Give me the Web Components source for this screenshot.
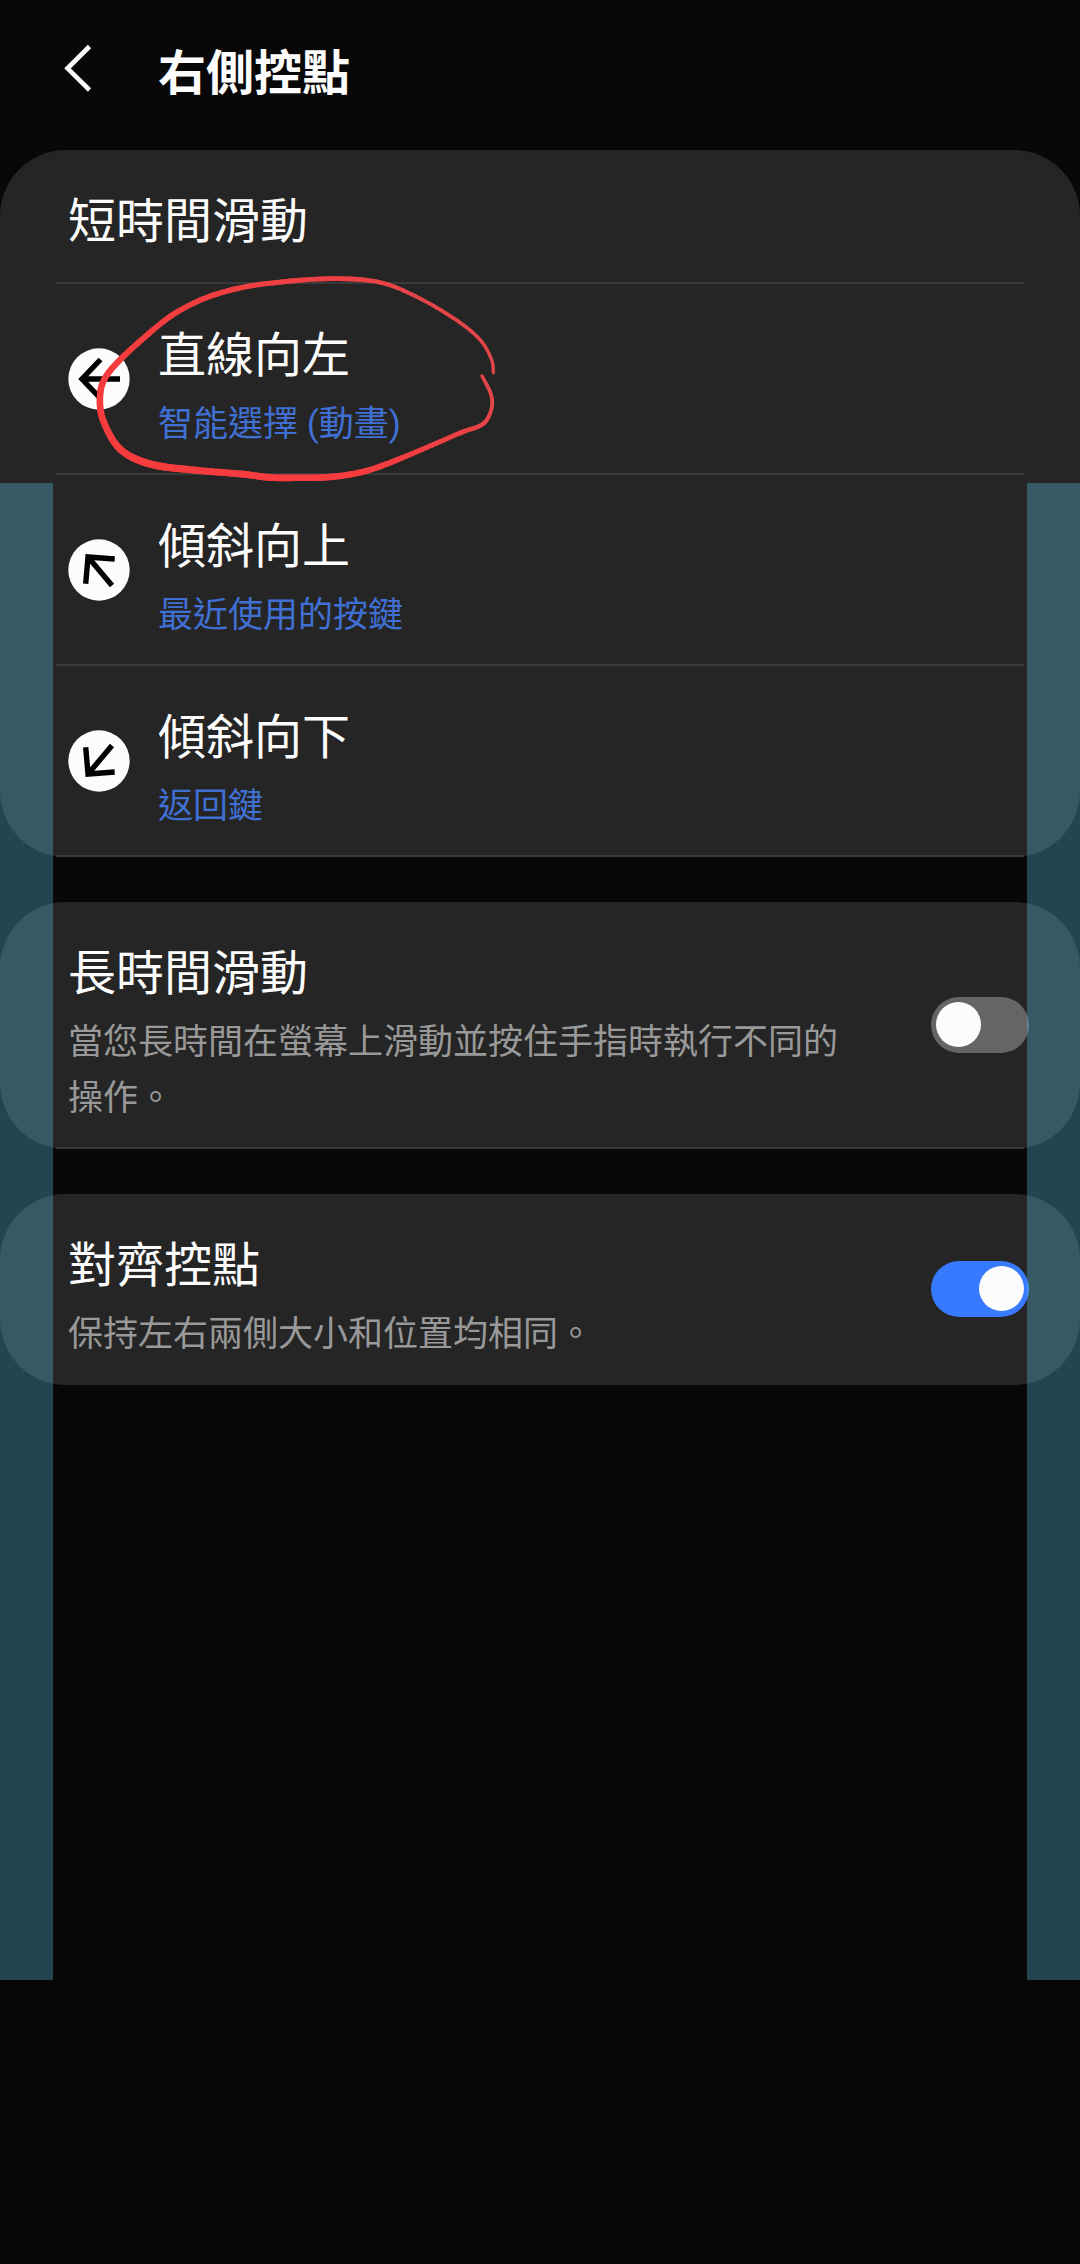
<!DOCTYPE html>
<html lang="zh-Hant">
<head>
<meta charset="utf-8">
<meta name="viewport" content="width=device-width, initial-scale=1">
<title>右側控點</title>
<style>
  body { margin: 0; background: #080808; }
</style>
</head>
<body>
<settings-page>
  <page-header slot="header">右側控點</page-header>
  <settings-card>
    <section-title>短時間滑動</section-title>
    <gesture-row direction="left">直線向左<span slot="value">智能選擇 (動畫)</span></gesture-row>
    <gesture-row direction="up">傾斜向上<span slot="value">最近使用的按鍵</span></gesture-row>
    <gesture-row direction="down">傾斜向下<span slot="value">返回鍵</span></gesture-row>
  </settings-card>
  <settings-card>
    <switch-row heading="長時間滑動" note="當您長時間在螢幕上滑動並按住手指時執行不同的操作。"></switch-row>
  </settings-card>
  <settings-card>
    <switch-row heading="對齊控點" note="保持左右兩側大小和位置均相同。" checked last></switch-row>
  </settings-card>
  <edge-handle slot="overlay" side="left"></edge-handle>
  <edge-handle slot="overlay" side="right"></edge-handle>
  <pen-mark slot="overlay"></pen-mark>
</settings-page>

<script>
const rowStyles = `
  * { box-sizing: border-box; }
  :host { display: block; }
  .title { font-size: 48px; line-height: 70px; color: #fcfcfc; }
  .sub { font-size: 35px; line-height: 56px; margin-top: 6px; }
  .divider { height: 2px; margin: 0 56px; background: #3a3a3a; }
`;

function define(name, html, setup) {
  customElements.define(name, class extends HTMLElement {
    constructor() {
      super();
      this.attachShadow({ mode: 'open' });
    }
    connectedCallback() {
      this.shadowRoot.innerHTML = html;
      if (setup) setup(this, this.shadowRoot);
    }
  });
}

define('settings-page', `
  <style>
    :host { display: block; position: relative; min-height: 100vh; background: #080808; color: #fcfcfc;
      font-family: Roboto, "Noto Sans CJK TC", sans-serif; }
    main { display: flex; flex-direction: column; gap: 45px; }
  </style>
  <slot name="header"></slot>
  <main><slot></slot></main>
  <slot name="overlay"></slot>
`);

define('page-header', `
  <style>
    :host { display: block; }
    header { display: flex; align-items: center; gap: 48px; padding: 39px 48px 41px; }
    button { width: 62px; height: 70px; padding: 0; border: 0; background: none; color: #fcfcfc; }
    svg { display: block; }
    h1 { margin: 0; font-size: 48px; line-height: 70px; font-weight: 700; }
  </style>
  <header>
    <button type="button" aria-label="返回">
      <svg width="62" height="70" viewBox="0 0 62 70" fill="none" stroke="currentColor" stroke-width="4.6">
        <path d="M41.5 7.5 19.5 29.3 41.5 51"/>
      </svg>
    </button>
    <h1><slot></slot></h1>
  </header>
`);

define('settings-card', `
  <style>
    :host { display: block; background: #252525; border-radius: 66px; }
  </style>
  <slot></slot>
`);

define('section-title', `
  <style>${rowStyles}
    h2 { margin: 0; padding: 37px 68px 25px; font-weight: 400; }
  </style>
  <h2 class="title"><slot></slot></h2>
  <div class="divider"></div>
`);

const arrows = {
  left: 'M32.5 11.5 14 31 32.5 50.5M14 31H52',
  up: 'M46.7 20 20 18 17.7 44.7M20 18 44 46.5',
  down: 'M46.7 42 20 44 17.7 17.3M20 44 44 15.5'
};

define('gesture-row', `
  <style>${rowStyles}
    a { display: flex; align-items: center; gap: 28px; padding: 0 68px; color: inherit; text-decoration: none; }
    svg { flex: none; display: block; }
    .text { flex: 1; padding: 37px 0 20px; }
    .sub { color: #4070d4; }
  </style>
  <a href="#">
    <svg width="62" height="62" viewBox="0 0 62 62" aria-hidden="true">
      <circle cx="31" cy="31" r="30.7" fill="#fcfcfc"/>
      <path fill="none" stroke="#000" stroke-width="5.4"/>
    </svg>
    <div class="text">
      <div class="title"><slot></slot></div>
      <div class="sub"><slot name="value"></slot></div>
    </div>
  </a>
  <div class="divider"></div>
`, (host, root) => {
  root.querySelector('path').setAttribute('d', arrows[host.getAttribute('direction')]);
});

define('switch-row', `
  <style>${rowStyles}
    .row { display: flex; align-items: center; gap: 70px; padding: 0 51px 0 68px; }
    .text { flex: 1; padding: 37px 0 20px; }
    label { display: block; }
    .sub { color: #999; }
    input { appearance: none; flex: none; width: 98px; height: 56px; margin: 0; padding: 5px; border-radius: 28px;
      background: #656567; display: flex; align-items: center; }
    input::before { content: ""; width: 45px; height: 45px; border-radius: 50%; background: #fcfcfc; }
    input:checked { background: #387aff; justify-content: flex-end; }
    :host([last]) .divider { background: none; }
  </style>
  <div class="row">
    <div class="text">
      <label class="title" for="toggle"></label>
      <div class="sub" id="note"></div>
    </div>
    <input type="checkbox" role="switch" id="toggle" aria-describedby="note">
  </div>
  <div class="divider"></div>
`, (host, root) => {
  root.querySelector('label').textContent = host.getAttribute('heading');
  root.querySelector('.sub').textContent = host.getAttribute('note');
  root.querySelector('input').checked = host.hasAttribute('checked');
});

/* Translucent strips marking where the edge gesture is detected. */
define('edge-handle', `
  <style>
    :host { display: block; position: absolute; top: 483px; width: 53px; height: 1497px;
      background: rgba(98, 211, 248, .3); pointer-events: none; }
    :host([side="left"]) { left: 0; }
    :host([side="right"]) { right: 0; }
  </style>
`);

/* Hand-drawn loop: each entry is x, y and pen width. */
const stroke = [
  [493.3,373,3],[491.7,360,3.2],[481.7,341.7,3.4],[463.3,325,3.6],[433.3,305.7,3.8],[400,289,4],
  [376.7,281.7,4.4],[350,279,4.8],[320,279,4.8],[286,281.5,5],[250,286,5.2],
  [220,293,5.4],[194,303,5.4],[168,318,5.6],[138,343,5.8],[116,364,6],[104,380,6.2],[100,397,6.4],[103,420,6.6],[120,449,7],
  [150,464,7.4],[193,470,7],[241,474,6.8],[270,477.5,6.8],[300,477.7,6.6],[330,477,6.4],[360,472.5,6],
  [386.7,464,5.6],[426.7,447.5,5],[460,433,4.6],[480.5,425.5,4.2],[488.5,417,3.8],[492.3,404,3.6],[490,391.7,3.6],[482,376,3.2]
];

define('pen-mark', `
  <style>
    :host { display: block; position: absolute; left: 90px; top: 270px; pointer-events: none; }
    svg { display: block; }
  </style>
  <svg width="420" height="220" viewBox="90 270 420 220" aria-hidden="true" fill="none" stroke-linecap="round"></svg>
`, (host, root) => {
  const at = i => stroke[Math.max(0, Math.min(stroke.length - 1, i))];
  const curve = (i, t, k) => {
    const [a, b, c, d] = [at(i - 1)[k], at(i)[k], at(i + 1)[k], at(i + 2)[k]];
    return 0.5 * (2 * b + (c - a) * t + (2 * a - 5 * b + 4 * c - d) * t * t + (3 * b - a - 3 * c + d) * t * t * t);
  };
  const steps = 8;
  let lines = '';
  for (let i = 0; i < stroke.length - 1; i++) {
    for (let s = 0; s < steps; s++) {
      const t = s / steps, u = (s + 1) / steps, w = curve(i, t, 2);
      const mix = Math.min(1, Math.max(0, (w - 3) / 3));
      const colour = `rgb(${Math.round(222 + 24 * mix)},${Math.round(72 - 12 * mix)},${Math.round(76 - 14 * mix)})`;
      lines += `<path d="M${curve(i, t, 0)} ${curve(i, t, 1)}L${curve(i, u, 0)} ${curve(i, u, 1)}" stroke="${colour}" stroke-width="${w}"/>`;
    }
  }
  root.querySelector('svg').innerHTML = lines;
});
</script>
</body>
</html>
